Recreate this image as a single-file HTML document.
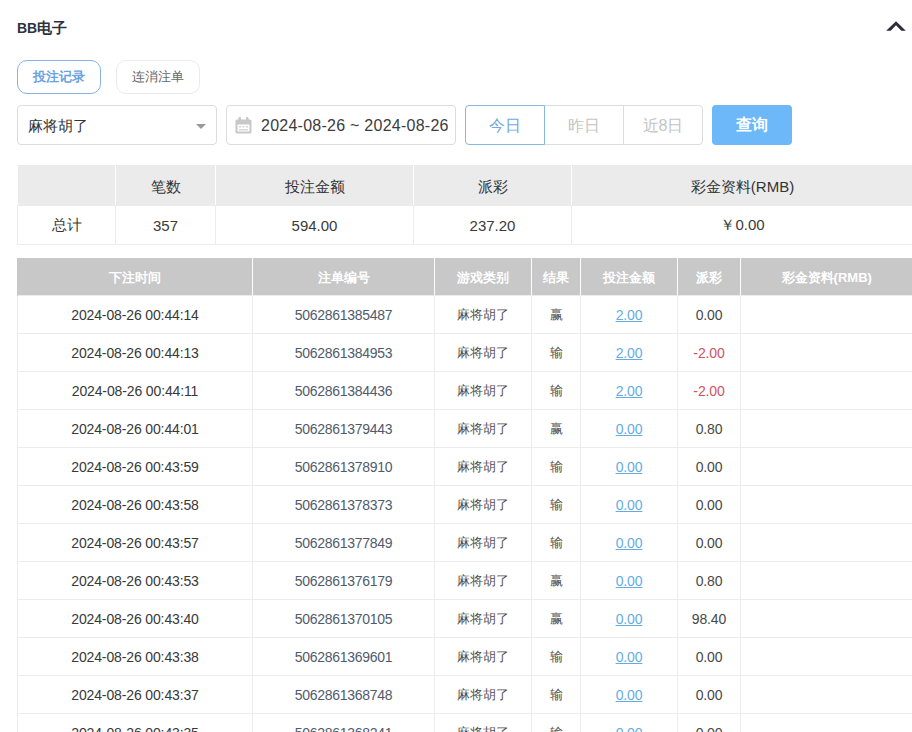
<!DOCTYPE html>
<html><head><meta charset="utf-8">
<style>
*{box-sizing:border-box;margin:0;padding:0}
html,body{width:912px;height:732px;overflow:hidden;background:#fff;font-family:"Liberation Sans",sans-serif;color:#333}
.abs{position:absolute}
.title{left:17px;top:18px;font-size:14px;font-weight:bold;color:#2c3340;line-height:20px}
.chev{left:880px;top:14px}
.tab{top:60px;height:34px;width:84px;border:1px solid #ebebeb;border-radius:10px;font-size:13px;line-height:32px;text-align:center;color:#666}
.tab.on{border-color:#86b2e6;color:#6aa2e2;background:#fff;font-weight:bold}
.sel{left:17px;top:105px;width:200px;height:40px;border:1px solid #dcdcdc;border-radius:4px;font-size:15px;line-height:38px;padding:1px 0 0 10px;color:#333}
.tri{left:196px;top:124px;width:0;height:0;border-left:5px solid transparent;border-right:5px solid transparent;border-top:5px solid #999}
.date{left:226px;top:105px;width:230px;height:40px;border:1px solid #dcdcdc;border-radius:4px;font-size:16px;line-height:38px;padding:1px 0 0 34px;color:#3c3c3c;letter-spacing:0.25px}
.cal{left:235px;top:117px}
.bg{top:105px;height:40px;width:80px;border:1px solid #dcdcdc;font-size:16px;line-height:38px;padding-top:1px;text-align:center;color:#c4c4c4}
.bg.on{border-color:#86b6e2;color:#72a8dc;z-index:2}
.q{left:712px;top:105px;width:80px;height:40px;border-radius:4px;background:#6cb8f8;color:#fff;font-weight:bold;font-size:16px;line-height:40px;text-align:center}
table{border-collapse:collapse;table-layout:fixed;position:absolute}
.sum{left:17px;top:165px;width:896px}
.sum td{border:1px solid #ececec;text-align:center;font-size:15px;color:#333;height:40px;padding:0}
.sum tr.h td{padding-top:3px}
.sum tr.b td{height:39px;padding-top:1px;color:#3a3a3a}
.sum tr.h td{background:#ebebeb;border-color:#ebebeb;border-right-color:#fff;border-left-color:#fff}
.det{left:17px;top:258px;width:895px}
.det th{background:#c8c8c8;color:#fff;font-weight:900;font-size:13px;height:37px;border-left:1px solid #fff;padding:3px 0 0 0}
.det th:first-child{border-left:1px solid #c8c8c8}
.det td{border:1px solid #ececec;text-align:center;font-size:14px;color:#383838;letter-spacing:-0.13px;height:38px;padding:2px 0 0 0}
.det td.id{color:#4f5b6d;letter-spacing:-0.28px}
.det td.g{font-size:13px;color:#505050}
.det td.p{color:#474747}
.det td a{color:#66ace4;text-decoration:underline}
.neg{color:#d2525f !important}
</style></head><body>
<div class="abs title">BB<span style="font-size:15px">电子</span></div>
<svg class="abs chev" width="32" height="24" viewBox="880 14 32 24"><polygon points="886.2,30.8 896,21.2 905.8,30.8 901.3,30.8 896,25.2 890.7,30.8" fill="#2b2e38"/></svg>
<div class="abs tab on" style="left:17px">投注记录</div>
<div class="abs tab" style="left:116px">连消注单</div>
<div class="abs sel">麻将胡了</div>
<div class="abs tri"></div>
<div class="abs date">2024-08-26 ~ 2024-08-26</div>
<svg class="abs cal" width="17" height="17" viewBox="0 0 17 17"><g fill="#c8c8c8"><rect x="0.5" y="2.5" width="16" height="14" rx="1.5"/><rect x="3.5" y="0" width="2.5" height="4" rx="1"/><rect x="11" y="0" width="2.5" height="4" rx="1"/></g><rect x="2.5" y="7.5" width="12" height="7" fill="#fff"/><g fill="#d8d8d8"><rect x="4" y="9" width="2" height="1.5"/><rect x="7.5" y="9" width="2" height="1.5"/><rect x="11" y="9" width="2" height="1.5"/><rect x="4" y="12" width="9" height="1.5"/></g></svg>
<div class="abs bg on" style="left:465px;border-radius:4px 0 0 4px">今日</div>
<div class="abs bg" style="left:544px;border-left-color:transparent">昨日</div>
<div class="abs bg" style="left:623px;border-radius:0 4px 4px 0">近8日</div>
<div class="abs q">查询</div>

<table class="sum">
<colgroup><col style="width:98px"><col style="width:100px"><col style="width:198px"><col style="width:158px"><col style="width:342px"></colgroup>
<tr class="h"><td></td><td>笔数</td><td>投注金额</td><td>派彩</td><td>彩金资料(RMB)</td></tr>
<tr class="b"><td>总计</td><td>357</td><td>594.00</td><td>237.20</td><td>￥0.00</td></tr>
</table>

<table class="det">
<colgroup><col style="width:235px"><col style="width:182px"><col style="width:97px"><col style="width:49px"><col style="width:97px"><col style="width:63px"><col style="width:172px"></colgroup>
<tr><th>下注时间</th><th>注单编号</th><th>游戏类别</th><th>结果</th><th>投注金额</th><th>派彩</th><th>彩金资料(RMB)</th></tr>
<tr><td>2024-08-26 00:44:14</td><td class="id">5062861385487</td><td class="g">麻将胡了</td><td class="g">赢</td><td><a>2.00</a></td><td class="p">0.00</td><td></td></tr>
<tr><td>2024-08-26 00:44:13</td><td class="id">5062861384953</td><td class="g">麻将胡了</td><td class="g">输</td><td><a>2.00</a></td><td class="neg">-2.00</td><td></td></tr>
<tr><td>2024-08-26 00:44:11</td><td class="id">5062861384436</td><td class="g">麻将胡了</td><td class="g">输</td><td><a>2.00</a></td><td class="neg">-2.00</td><td></td></tr>
<tr><td>2024-08-26 00:44:01</td><td class="id">5062861379443</td><td class="g">麻将胡了</td><td class="g">赢</td><td><a>0.00</a></td><td class="p">0.80</td><td></td></tr>
<tr><td>2024-08-26 00:43:59</td><td class="id">5062861378910</td><td class="g">麻将胡了</td><td class="g">输</td><td><a>0.00</a></td><td class="p">0.00</td><td></td></tr>
<tr><td>2024-08-26 00:43:58</td><td class="id">5062861378373</td><td class="g">麻将胡了</td><td class="g">输</td><td><a>0.00</a></td><td class="p">0.00</td><td></td></tr>
<tr><td>2024-08-26 00:43:57</td><td class="id">5062861377849</td><td class="g">麻将胡了</td><td class="g">输</td><td><a>0.00</a></td><td class="p">0.00</td><td></td></tr>
<tr><td>2024-08-26 00:43:53</td><td class="id">5062861376179</td><td class="g">麻将胡了</td><td class="g">赢</td><td><a>0.00</a></td><td class="p">0.80</td><td></td></tr>
<tr><td>2024-08-26 00:43:40</td><td class="id">5062861370105</td><td class="g">麻将胡了</td><td class="g">赢</td><td><a>0.00</a></td><td class="p">98.40</td><td></td></tr>
<tr><td>2024-08-26 00:43:38</td><td class="id">5062861369601</td><td class="g">麻将胡了</td><td class="g">输</td><td><a>0.00</a></td><td class="p">0.00</td><td></td></tr>
<tr><td>2024-08-26 00:43:37</td><td class="id">5062861368748</td><td class="g">麻将胡了</td><td class="g">输</td><td><a>0.00</a></td><td class="p">0.00</td><td></td></tr>
<tr><td>2024-08-26 00:43:35</td><td class="id">5062861368241</td><td class="g">麻将胡了</td><td class="g">输</td><td><a>0.00</a></td><td class="p">0.00</td><td></td></tr>
</table>
</body></html>
